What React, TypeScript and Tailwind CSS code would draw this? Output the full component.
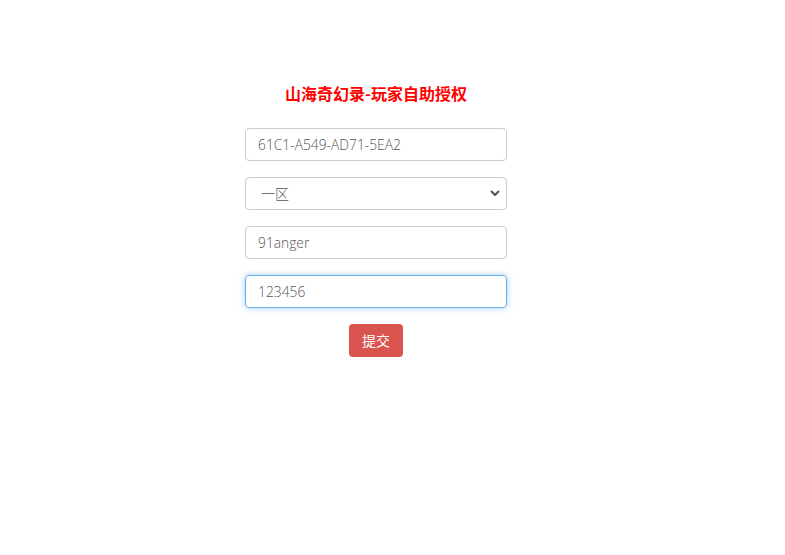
const fieldFont = { fontFamily: '"Open Sans", "Noto Sans CJK SC", sans-serif' }

const App = () => {
  return (
    <div className="min-h-[555px] bg-white" style={fieldFont}>
      <div className="w-[262px] ml-[245px] pt-[82px] flex flex-col">
        <h1
          className="text-center text-[16px] font-bold text-[#ff0000] leading-[22px] mb-[24px]"
          style={{ fontFamily: '"Noto Sans CJK SC", sans-serif' }}
        >
          山海奇幻录-玩家自助授权
        </h1>
        <form className="flex flex-col gap-[16px]" onSubmit={(e) => e.preventDefault()}>
          <input
            defaultValue="61C1-A549-AD71-5EA2"
            className="h-[33px] w-full rounded-[4px] border border-[#cccccc] px-[12px] text-[13.8px] font-light text-[#555555] outline-none"
          />
          <div className="relative">
            <select
              defaultValue="1"
              className="h-[33px] w-full appearance-none rounded-[4px] border border-[#cccccc] bg-white pl-[15px] pr-[30px] text-[14px] text-[#555555] outline-none"
              style={{ fontFamily: '"Noto Sans CJK SC", sans-serif', fontWeight: 300 }}
            >
              <option value="1">一区</option>
              <option value="2">二区</option>
            </select>
            <svg
              className="pointer-events-none absolute right-[7px] top-[13px]"
              width="10"
              height="7"
              viewBox="0 0 10 7"
            >
              <path d="M1.5 1.5 L5 5 L8.5 1.5" fill="none" stroke="#4a5563" strokeWidth="2" strokeLinecap="round" strokeLinejoin="round" />
            </svg>
          </div>
          <input
            defaultValue="91anger"
            className="h-[33px] w-full rounded-[4px] border border-[#cccccc] px-[12px] text-[13.8px] font-light text-[#555555] outline-none"
          />
          <input
            defaultValue="123456"
            className="h-[33px] w-full rounded-[4px] border border-[#66afe9] px-[12px] text-[13.8px] font-light text-[#555555] outline-none shadow-[0_0_6px_rgba(102,175,233,0.6)]"
          />
          <div className="flex justify-center">
            <button
              type="submit"
              className="h-[33px] w-[54px] rounded-[4px] bg-[#d9534f] text-[14px] text-white"
              style={{ fontFamily: '"Noto Sans CJK SC", sans-serif' }}
            >
              提交
            </button>
          </div>
        </form>
      </div>
    </div>
  )
}

export default App
